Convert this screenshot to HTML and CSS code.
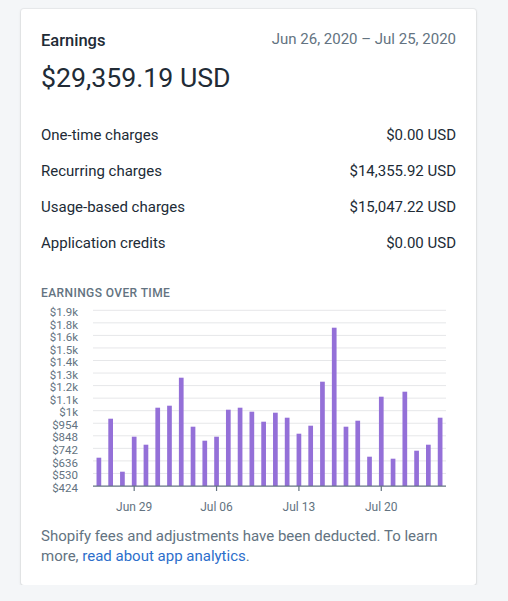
FILE: index.html
```html
<!DOCTYPE html>
<html lang="en">
<head>
<meta charset="utf-8">
<title>Earnings</title>
<link rel="stylesheet" href="styles.css">
</head>
<body>
<div class="card">
  <div class="header">
    <h2 class="title">Earnings</h2>
    <span class="range">Jun 26, 2020 – Jul 25, 2020</span>
  </div>
  <div class="total">$29,359.19 USD</div>
  <ul class="rows">
    <li class="row"><span>One-time charges</span><span>$0.00 USD</span></li>
    <li class="row"><span>Recurring charges</span><span>$14,355.92 USD</span></li>
    <li class="row"><span>Usage-based charges</span><span>$15,047.22 USD</span></li>
    <li class="row"><span>Application credits</span><span>$0.00 USD</span></li>
  </ul>
  <h3 class="chart-title">Earnings over time</h3>
  <div class="chart">
    <div class="y-labels">
      <span>$1.9k</span><span>$1.8k</span><span>$1.6k</span><span>$1.5k</span><span>$1.4k</span>
      <span>$1.3k</span><span>$1.2k</span><span>$1.1k</span><span>$1k</span><span>$954</span>
      <span>$848</span><span>$742</span><span>$636</span><span>$530</span><span>$424</span>
    </div>
    <svg class="plot" width="353" height="190" viewBox="0 0 353 190">
      <g class="grid">
        <line x1="0" x2="353" y1="6.3" y2="6.3"/>
        <line x1="0" x2="353" y1="18.85" y2="18.85"/>
        <line x1="0" x2="353" y1="31.4" y2="31.4"/>
        <line x1="0" x2="353" y1="43.95" y2="43.95"/>
        <line x1="0" x2="353" y1="56.5" y2="56.5"/>
        <line x1="0" x2="353" y1="69.05" y2="69.05"/>
        <line x1="0" x2="353" y1="81.6" y2="81.6"/>
        <line x1="0" x2="353" y1="94.15" y2="94.15"/>
        <line x1="0" x2="353" y1="106.7" y2="106.7"/>
        <line x1="0" x2="353" y1="119.25" y2="119.25"/>
        <line x1="0" x2="353" y1="131.8" y2="131.8"/>
        <line x1="0" x2="353" y1="144.35" y2="144.35"/>
        <line x1="0" x2="353" y1="156.9" y2="156.9"/>
        <line x1="0" x2="353" y1="169.45" y2="169.45"/>
      </g>
      <g class="bars">
        <rect x="3.53" y="153.7" width="4.7" height="28.3"/>
        <rect x="15.30" y="114.7" width="4.7" height="67.3"/>
        <rect x="27.07" y="167.7" width="4.7" height="14.3"/>
        <rect x="38.83" y="132.7" width="4.7" height="49.3"/>
        <rect x="50.60" y="140.7" width="4.7" height="41.3"/>
        <rect x="62.37" y="103.7" width="4.7" height="78.3"/>
        <rect x="74.13" y="101.7" width="4.7" height="80.3"/>
        <rect x="85.90" y="73.7" width="4.7" height="108.3"/>
        <rect x="97.67" y="122.7" width="4.7" height="59.3"/>
        <rect x="109.43" y="136.7" width="4.7" height="45.3"/>
        <rect x="121.20" y="132.7" width="4.7" height="49.3"/>
        <rect x="132.97" y="105.7" width="4.7" height="76.3"/>
        <rect x="144.73" y="103.7" width="4.7" height="78.3"/>
        <rect x="156.50" y="107.7" width="4.7" height="74.3"/>
        <rect x="168.27" y="117.7" width="4.7" height="64.3"/>
        <rect x="180.03" y="108.7" width="4.7" height="73.3"/>
        <rect x="191.80" y="113.7" width="4.7" height="68.3"/>
        <rect x="203.57" y="129.7" width="4.7" height="52.3"/>
        <rect x="215.33" y="121.7" width="4.7" height="60.3"/>
        <rect x="227.10" y="77.7" width="4.7" height="104.3"/>
        <rect x="238.87" y="23.7" width="4.7" height="158.3"/>
        <rect x="250.63" y="122.7" width="4.7" height="59.3"/>
        <rect x="262.40" y="116.7" width="4.7" height="65.3"/>
        <rect x="274.17" y="152.7" width="4.7" height="29.3"/>
        <rect x="285.93" y="92.7" width="4.7" height="89.3"/>
        <rect x="297.70" y="154.7" width="4.7" height="27.3"/>
        <rect x="309.47" y="87.7" width="4.7" height="94.3"/>
        <rect x="321.23" y="146.7" width="4.7" height="35.3"/>
        <rect x="333.00" y="140.7" width="4.7" height="41.3"/>
        <rect x="344.77" y="113.7" width="4.7" height="68.3"/>
      </g>
      <g class="axis">
        <line x1="0" x2="353" y1="182.2" y2="182.2"/>
        <line x1="41.18" x2="41.18" y1="182" y2="187"/>
        <line x1="123.55" x2="123.55" y1="182" y2="187"/>
        <line x1="205.92" x2="205.92" y1="182" y2="187"/>
        <line x1="288.28" x2="288.28" y1="182" y2="187"/>
      </g>
    </svg>
    <div class="x-labels">
      <span class="x-jun29">Jun 29</span>
      <span class="x-jul06">Jul 06</span>
      <span class="x-jul13">Jul 13</span>
      <span class="x-jul20">Jul 20</span>
    </div>
  </div>
  <p class="note">Shopify fees and adjustments have been deducted. To learn more, <a href="#" class="link">read about app analytics</a>.</p>
</div>
</body>
</html>
```

FILE: styles.css
```css
* { box-sizing: border-box; }
html, body { margin: 0; padding: 0; }
body {
  background: #f4f6f8;
  font-family: Roboto, "Noto Sans", sans-serif;
  color: #212b36;
  padding: 9px 0 0 21px;
}
.card {
  width: 455px;
  height: 576px;
  background: #fff;
  border-radius: 3px;
  box-shadow: 0 0 0 1px rgba(63,63,68,0.05), 0 1px 3px 0 rgba(63,63,68,0.15);
  padding: 20px 20px 20px 20px;
}
.header {
  display: flex;
  justify-content: space-between;
  align-items: flex-start;
  height: 24px;
}
.title {
  margin: 0;
  font-size: 16.5px;
  font-weight: 500;
  line-height: 24px;
}
.range {
  font-size: 15px;
  line-height: 20px;
  color: #637381;
}
.total {
  margin-top: 9px;
  font-size: 26.7px;
  line-height: 32px;
  font-weight: 400;
}
.rows {
  list-style: none;
  margin: 23px 0 0;
  padding: 0;
}
.row {
  display: flex;
  justify-content: space-between;
  align-items: center;
  height: 36px;
  font-size: 15px;
}
.chart-title {
  margin: 24px 0 0;
  font-size: 12px;
  line-height: 16px;
  font-weight: 500;
  text-transform: uppercase;
  letter-spacing: 0.4px;
  color: #637381;
}
.chart {
  margin-top: 3px;
  display: grid;
  grid-template-columns: 37px 353px;
  column-gap: 15px;
}
.y-labels {
  display: flex;
  flex-direction: column;
  align-items: flex-end;
  padding-top: 2px;
  font-size: 11.5px;
  color: #637381;
}
.y-labels span {
  height: 12.55px;
  line-height: 12.55px;
}
.plot { display: block; }
.grid line { stroke: #e6e7e9; stroke-width: 1; }
.bars rect { fill: #9470d8; }
.axis line { stroke: #637381; stroke-width: 1.2; }
.x-labels {
  grid-column: 2;
  display: grid;
  grid-template-columns: repeat(30, 1fr);
  margin-top: 5px;
  font-size: 12px;
  line-height: 16px;
  color: #637381;
}
.x-labels span { white-space: nowrap; justify-self: center; }
.x-jun29 { grid-column: 3 / span 3; }
.x-jul06 { grid-column: 10 / span 3; }
.x-jul13 { grid-column: 17 / span 3; }
.x-jul20 { grid-column: 24 / span 3; }
.note {
  margin: 11px 0 0;
  font-size: 15px;
  line-height: 20px;
  color: #637381;
}
.link { color: #2c6ecb; text-decoration: none; }
```
